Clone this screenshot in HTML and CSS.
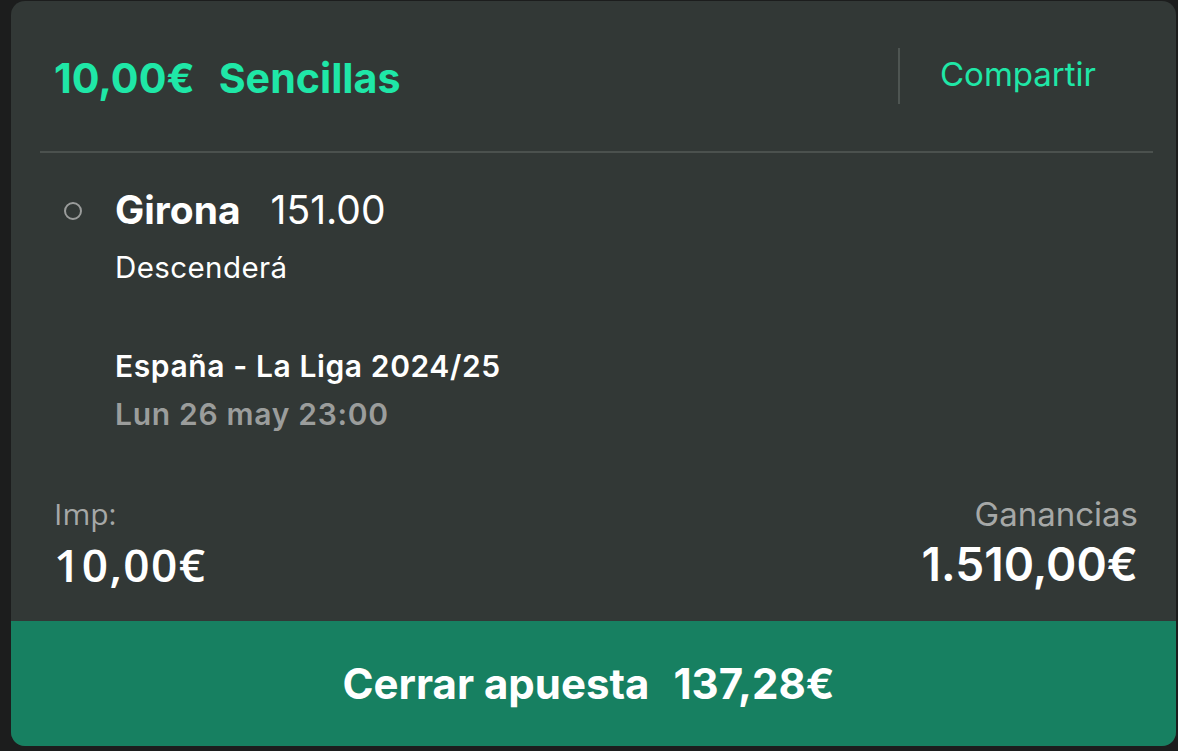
FILE: index.html
```html
<!DOCTYPE html>
<html lang="es">
<head>
<meta charset="utf-8">
<title>Apuesta</title>
<link rel="stylesheet" href="styles.css">
</head>
<body>
<div class="card">
  <div class="header">
    <div class="title"><span class="stake">10,00€</span><span class="kind">Sencillas</span></div>
    <div class="divider"></div>
    <div class="share">Compartir</div>
  </div>
  <div class="rule"></div>
  <div class="bet">
    <div class="radio"></div>
    <div class="bet-info">
      <div class="pick"><span class="team">Girona</span><span class="odds">151.00</span></div>
      <div class="market">Descenderá</div>
      <div class="event">España - La Liga 2024/25</div>
      <div class="date">Lun 26 may 23:00</div>
    </div>
  </div>
  <div class="totals">
    <div class="stake-box">
      <div class="label imp">Imp:</div>
      <div class="amount imp-amount">10,00€</div>
    </div>
    <div class="win-box">
      <div class="label">Ganancias</div>
      <div class="amount">1.510,00€</div>
    </div>
  </div>
  <div class="cashout"><span>Cerrar apuesta</span><span>137,28€</span></div>
</div>
</body>
</html>
```

FILE: styles.css
```css
html, body {
  margin: 0;
  padding: 0;
  background: #1c1d1d;
  height: 751px;
  overflow: hidden;
}
body {
  font-family: Inter, "Liberation Sans", sans-serif;
  color: #ffffff;
}
.card {
  margin: 1px 2px 0 11px;
  height: 745px;
  background: #323836;
  border-radius: 14px;
  overflow: hidden;
  display: flex;
  flex-direction: column;
}
.header {
  height: 150px;
  display: flex;
  align-items: center;
  padding: 0 80px 0 43px;
}
.title {
  flex: 1;
  color: #1fe7a7;
  font-weight: 700;
  font-size: 41.2px;
  padding-top: 4px;
}
.title .kind { margin-left: 24px; }
.divider {
  width: 2px;
  height: 56px;
  background: #4e5552;
  margin-right: 40px;
  margin-top: 0;
}
.share {
  color: #1fe7a7;
  font-size: 33px;
  margin-top: -4px;
}
.rule {
  height: 2px;
  background: #4b514e;
  margin: 0 23px 0 29px;
}
.bet {
  display: flex;
  padding: 34px 0 0 53px;
}
.radio {
  border: 2px solid #9a9c9b;
  border-radius: 50%;
  margin-top: 15px;
  box-sizing: border-box;
  width: 18px;
  height: 18px;
}
.bet-info {
  margin-left: 33px;
}
.pick {
  font-size: 39px;
  line-height: 46px;
}
.team { font-weight: 700; }
.odds { margin-left: 30px; font-weight: 400; }
.market {
  font-size: 29.5px;
  margin-top: 17px;
  line-height: 34px;
  letter-spacing: 0.4px;
}
.event {
  font-size: 30px;
  font-weight: 600;
  line-height: 34px;
  margin-top: 65px;
  letter-spacing: 0.6px;
}
.date {
  font-size: 30px;
  font-weight: 600;
  line-height: 34px;
  margin-top: 14px;
  color: #9b9d9c;
  letter-spacing: 0.7px;
}
.totals {
  display: flex;
  justify-content: space-between;
  padding: 0 38px 0 43px;
  margin-top: auto;
  margin-bottom: 30px;
}
.label {
  font-size: 33px;
  color: #a6a8a7;
  line-height: 38px;
}
.imp { font-size: 30px; }
.amount {
  font-size: 46px;
  font-weight: 600;
  line-height: 54px;
  margin-top: 4px;
}
.imp, .imp-amount {
  font-family: "Open Sans", Inter, sans-serif;
}
.imp-amount {
  font-size: 46px;
  letter-spacing: 1.4px;
}
.win-box { text-align: right; }
.cashout {
  height: 125px;
  background: #178061;
  display: flex;
  justify-content: center;
  align-items: center;
  gap: 24px;
  font-size: 42px;
  font-weight: 700;
  padding-right: 10px;
}
```
